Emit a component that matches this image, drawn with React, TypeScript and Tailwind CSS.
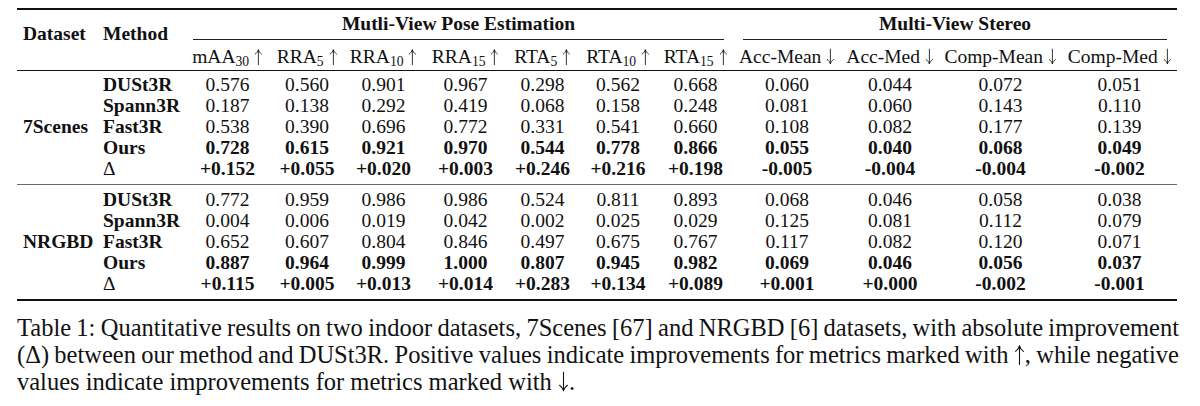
import React from 'react';

type Row = { method: string; values: string[]; bold?: boolean };

const GRID =
  'grid grid-cols-[80px_87px_87px_72px_81px_83px_71px_80px_75px_108px_98px_123px_115px]';

const poseHeads: [string, string][] = [
  ['mAA', '30'],
  ['RRA', '5'],
  ['RRA', '10'],
  ['RRA', '15'],
  ['RTA', '5'],
  ['RTA', '10'],
  ['RTA', '15'],
];

const stereoHeads = ['Acc-Mean', 'Acc-Med', 'Comp-Mean', 'Comp-Med'];

const datasets: { name: string; rows: Row[] }[] = [
  {
    name: '7Scenes',
    rows: [
      { method: 'DUSt3R', values: ['0.576', '0.560', '0.901', '0.967', '0.298', '0.562', '0.668', '0.060', '0.044', '0.072', '0.051'] },
      { method: 'Spann3R', values: ['0.187', '0.138', '0.292', '0.419', '0.068', '0.158', '0.248', '0.081', '0.060', '0.143', '0.110'] },
      { method: 'Fast3R', values: ['0.538', '0.390', '0.696', '0.772', '0.331', '0.541', '0.660', '0.108', '0.082', '0.177', '0.139'] },
      { method: 'Ours', bold: true, values: ['0.728', '0.615', '0.921', '0.970', '0.544', '0.778', '0.866', '0.055', '0.040', '0.068', '0.049'] },
      { method: 'Δ', bold: true, values: ['+0.152', '+0.055', '+0.020', '+0.003', '+0.246', '+0.216', '+0.198', '-0.005', '-0.004', '-0.004', '-0.002'] },
    ],
  },
  {
    name: 'NRGBD',
    rows: [
      { method: 'DUSt3R', values: ['0.772', '0.959', '0.986', '0.986', '0.524', '0.811', '0.893', '0.068', '0.046', '0.058', '0.038'] },
      { method: 'Spann3R', values: ['0.004', '0.006', '0.019', '0.042', '0.002', '0.025', '0.029', '0.125', '0.081', '0.112', '0.079'] },
      { method: 'Fast3R', values: ['0.652', '0.607', '0.804', '0.846', '0.497', '0.675', '0.767', '0.117', '0.082', '0.120', '0.071'] },
      { method: 'Ours', bold: true, values: ['0.887', '0.964', '0.999', '1.000', '0.807', '0.945', '0.982', '0.069', '0.046', '0.056', '0.037'] },
      { method: 'Δ', bold: true, values: ['+0.115', '+0.005', '+0.013', '+0.014', '+0.283', '+0.134', '+0.089', '+0.001', '+0.000', '-0.002', '-0.001'] },
    ],
  },
];

// math-style thin arrow (\uparrow / \downarrow)
function Arrow({ down = false }: { down?: boolean }) {
  return (
    <svg
      viewBox="0 0 10 20"
      className={`inline-block w-[0.45em] h-[0.8em] align-[-0.08em] ${down ? 'rotate-180' : ''}`}
      fill="none"
      stroke="currentColor"
      strokeWidth={1.1}
      strokeLinecap="round"
    >
      <path d="M5 20V1.2" />
      <path d="M1 6.5C3 5 4.3 3.2 5 1C5.7 3.2 7 5 9 6.5" />
    </svg>
  );
}

function Block({ name, rows }: { name: string; rows: Row[] }) {
  return (
    <div className={`${GRID} leading-[21px]`}>
      {rows.map((r, i) => (
        <React.Fragment key={r.method}>
          <div className="pl-[6px] font-bold">{i === 2 ? name : ''}</div>
          <div className={`pl-[6px] ${r.method === 'Δ' ? 'font-normal' : 'font-bold'}`}>{r.method}</div>
          {r.values.map((v, j) => (
            <div key={j} className={`text-center ${r.bold ? 'font-bold' : ''}`}>
              {v}
            </div>
          ))}
        </React.Fragment>
      ))}
    </div>
  );
}

export default function App() {
  return (
    <div className="w-[1200px] h-[406px] bg-white overflow-hidden pl-[17px] pt-[8px] font-['Liberation_Serif',serif] text-[#111]">
      <div className="w-[1160px] text-[19.5px]">
        {/* toprule */}
        <div className="h-[2px] bg-[#111]" />

        {/* header */}
        <div className={`${GRID} leading-[21px]`}>
          <div className="row-span-2 pl-[6px] pt-[13px] font-bold">Dataset</div>
          <div className="row-span-2 pl-[6px] pt-[13px] font-bold">Method</div>
          <div className="col-span-7 px-[9px]">
            <div className="border-b border-[#222] pt-[3px] pb-[5px] text-center font-bold">
              Mutli-View Pose Estimation
            </div>
          </div>
          <div className="col-span-4 px-[10px]">
            <div className="border-b border-[#222] pt-[3px] pb-[5px] text-center font-bold">
              Multi-View Stereo
            </div>
          </div>
          {poseHeads.map(([h, s], i) => (
            <div key={i} className="pt-[6px] pb-[3px] text-center whitespace-nowrap">
              {h}
              <sub className="text-[70%]">{s}</sub> <Arrow />
            </div>
          ))}
          {stereoHeads.map((h) => (
            <div key={h} className="pt-[6px] pb-[3px] text-center whitespace-nowrap">
              {h} <Arrow down />
            </div>
          ))}
        </div>

        {/* midrule */}
        <div className="h-px bg-[#111]" />

        <div className="pt-[3px] pb-[5px]">
          <Block {...datasets[0]} />
        </div>
        <div className="h-px bg-[#6b6b6b]" />
        <div className="pt-[4px] pb-[5px]">
          <Block {...datasets[1]} />
        </div>

        {/* bottomrule */}
        <div className="h-[2px] bg-[#111]" />
      </div>

      {/* caption */}
      <div className="w-[1162px] mt-[13px] text-[24.5px] leading-[27px]">
        <div className="text-justify [text-align-last:justify] [word-spacing:-2px]">
          Table 1: Quantitative results on two indoor datasets, 7Scenes [67] and NRGBD [6] datasets, with absolute improvement
        </div>
        <div className="text-justify [text-align-last:justify] [word-spacing:-2px]">
          (Δ) between our method and DUSt3R. Positive values indicate improvements for metrics marked with <Arrow />, while negative
        </div>
        <div>
          values indicate improvements for metrics marked with <Arrow down />.
        </div>
      </div>
    </div>
  );
}
